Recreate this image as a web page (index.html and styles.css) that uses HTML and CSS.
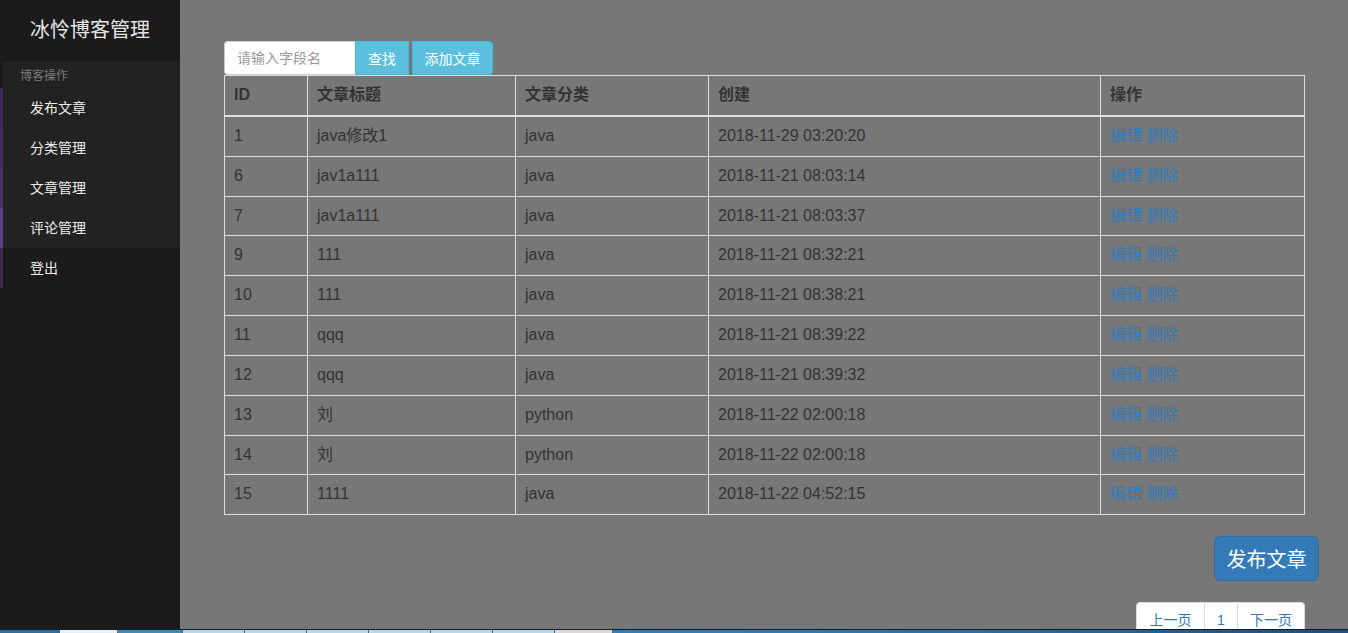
FILE: index.html
```html
<!DOCTYPE html>
<html lang="zh">
<head>
<meta charset="utf-8">
<title>冰怜博客管理</title>
<link rel="stylesheet" href="styles.css">
</head>
<body>
<div class="layout">
  <aside class="sidebar">
    <div class="brand">冰怜博客管理</div>
    <div class="group">
      <div class="group-title">博客操作</div>
      <a class="nav-item n1">发布文章</a>
      <a class="nav-item n2">分类管理</a>
      <a class="nav-item n3">文章管理</a>
      <a class="nav-item n4">评论管理</a>
    </div>
    <a class="nav-item n5 logout">登出</a>
  </aside>
  <main class="main">
    <div class="toolbar">
      <input class="search" type="text" placeholder="请输入字段名">
      <button class="btn-info">查找</button>
      <button class="btn-info add">添加文章</button>
    </div>
    <table class="grid">
      <thead>
        <tr><th class="c1">ID</th><th class="c2">文章标题</th><th class="c3">文章分类</th><th class="c4">创建</th><th class="c5">操作</th></tr>
      </thead>
      <tbody>
        <tr><td>1</td><td>java修改1</td><td>java</td><td>2018-11-29 03:20:20</td><td><a>编辑</a> <a>删除</a></td></tr>
        <tr><td>6</td><td>jav1a111</td><td>java</td><td>2018-11-21 08:03:14</td><td><a>编辑</a> <a>删除</a></td></tr>
        <tr><td>7</td><td>jav1a111</td><td>java</td><td>2018-11-21 08:03:37</td><td><a>编辑</a> <a>删除</a></td></tr>
        <tr><td>9</td><td>111</td><td>java</td><td>2018-11-21 08:32:21</td><td><a>编辑</a> <a>删除</a></td></tr>
        <tr><td>10</td><td>111</td><td>java</td><td>2018-11-21 08:38:21</td><td><a>编辑</a> <a>删除</a></td></tr>
        <tr><td>11</td><td>qqq</td><td>java</td><td>2018-11-21 08:39:22</td><td><a>编辑</a> <a>删除</a></td></tr>
        <tr><td>12</td><td>qqq</td><td>java</td><td>2018-11-21 08:39:32</td><td><a>编辑</a> <a>删除</a></td></tr>
        <tr><td>13</td><td>刘</td><td>python</td><td>2018-11-22 02:00:18</td><td><a>编辑</a> <a>删除</a></td></tr>
        <tr><td>14</td><td>刘</td><td>python</td><td>2018-11-22 02:00:18</td><td><a>编辑</a> <a>删除</a></td></tr>
        <tr><td>15</td><td>1111</td><td>java</td><td>2018-11-22 04:52:15</td><td><a>编辑</a> <a>删除</a></td></tr>
      </tbody>
    </table>
    <div class="actions">
      <button class="btn-primary">发布文章</button>
    </div>
    <div class="pager-row">
      <ul class="pager">
        <li>上一页</li>
        <li>1</li>
        <li>下一页</li>
      </ul>
    </div>
  </main>
</div>
<div class="taskbar">
  <span class="tb s0"></span>
  <span class="tb s1"></span>
  <span class="tb s2"></span>
  <span class="tb s3"></span>
  <span class="tb s3"></span>
  <span class="tb s3"></span>
  <span class="tb s3"></span>
  <span class="tb s3"></span>
  <span class="tb s3"></span>
  <span class="tb s4"></span>
</div>
</body>
</html>
```
FILE: styles.css
```css
* { box-sizing: border-box; }
html, body { margin: 0; padding: 0; height: 100%; overflow: hidden; }
body {
  font-family: "Liberation Sans", Arial, "Noto Sans CJK SC", sans-serif;
  font-size: 14px;
  color: #333;
  background: #777;
}
.layout { display: flex; height: 633px; }
.sidebar {
  width: 180px;
  flex: 0 0 180px;
  background: #1b1b1b;
  display: flex;
  flex-direction: column;
}
.brand {
  height: 62px;
  line-height: 60px;
  padding-left: 30px;
  font-size: 20px;
  color: #e6e6e6;
}
.group { background: #222; margin-left: 3px; }
.group-title {
  height: 26px;
  line-height: 24px;
  padding-top: 2px;
  padding-left: 17px;
  font-size: 12px;
  color: #7a7a7a;
}
.nav-item {
  display: block;
  height: 40px;
  line-height: 40px;
  padding-left: 27px;
  color: #eee;
  font-size: 14px;
  position: relative;
}
.nav-item::before {
  content: "";
  position: absolute;
  left: -3px;
  top: 0;
  width: 3px;
  height: 40px;
}
.n1::before { background: #3b2b52; }
.n2::before { background: #3f2e59; }
.n3::before { background: #453263; }
.n4::before { background: #5a4088; }
.logout { margin-left: 3px; }
.n5::before { background: #3a2a50; }

.main { flex: 1; padding: 41px 43px 0 44px; }
.toolbar { display: flex; height: 34px; }
.search {
  width: 131px;
  height: 34px;
  border: 1px solid #ccc;
  border-right: none;
  border-radius: 4px 0 0 4px;
  padding: 6px 12px;
  font: inherit;
  font-size: 14px;
  background: #fff;
  outline: none;
}
.search::placeholder { color: #999; }
.btn-info {
  height: 34px;
  border: 1px solid #46b8da;
  background: #5bc0de;
  color: #fff;
  font: inherit;
  font-size: 14px;
  padding: 0 12px;
  border-radius: 0;
}
.btn-info.add { margin-left: 3px; border-radius: 0 4px 4px 0; width: 81px; padding: 0; }

.grid {
  width: 100%;
  border-collapse: collapse;
  font-size: 16px;
  color: #333;
}
.grid th, .grid td {
  border: 1px solid #ddd;
  padding: 8px 9px;
  text-align: left;
  line-height: 1.42857;
}
.grid th { font-weight: bold; border-bottom: 2px solid #ddd; }
.grid td a { color: #337ab7; }
.c1 { width: 83px; }
.c2 { width: 208px; }
.c3 { width: 193px; }
.c4 { width: 392px; }

.actions { display: flex; justify-content: flex-end; margin: 21px -14px 0 0; }
.btn-primary {
  width: 105px;
  height: 45px;
  background: #337ab7;
  border: 1px solid #2e6da4;
  border-radius: 6px;
  color: #fff;
  font: inherit;
  font-size: 20px;
}
.pager-row { display: flex; justify-content: flex-end; margin-top: 21px; }
.pager {
  display: flex;
  list-style: none;
  margin: 0;
  padding: 0;
}
.pager li {
  height: 34px;
  line-height: 34px;
  background: #fff;
  border: 1px solid #ddd;
  margin-left: -1px;
  color: #337ab7;
  font-size: 14px;
  text-align: center;
}
.pager li:first-child { border-radius: 4px 0 0 0; width: 69px; }
.pager li:nth-child(2) { width: 34px; }
.pager li:last-child { border-radius: 0 4px 0 0; width: 68px; }

.taskbar {
  position: fixed;
  left: 0;
  right: 0;
  bottom: 0;
  height: 4px;
  border-top: 1px solid #10202e;
  background: linear-gradient(90deg, #2a6aa0 0%, #3a86c0 20%, #2f7ab4 60%, #1e4f7e 100%);
  display: flex;
}
.tb { height: 3px; display: block; border-right: 1px solid #3b6a8e; }
.s0 { width: 60px; background: #2e6c9c; }
.s1 { width: 58px; background: #e8eef2; }
.s2 { width: 65px; background: #3c8cb2; }
.s3 { width: 62px; background: #b8d8e8; }
.s4 { width: 58px; background: #e2d6d8; }
```
